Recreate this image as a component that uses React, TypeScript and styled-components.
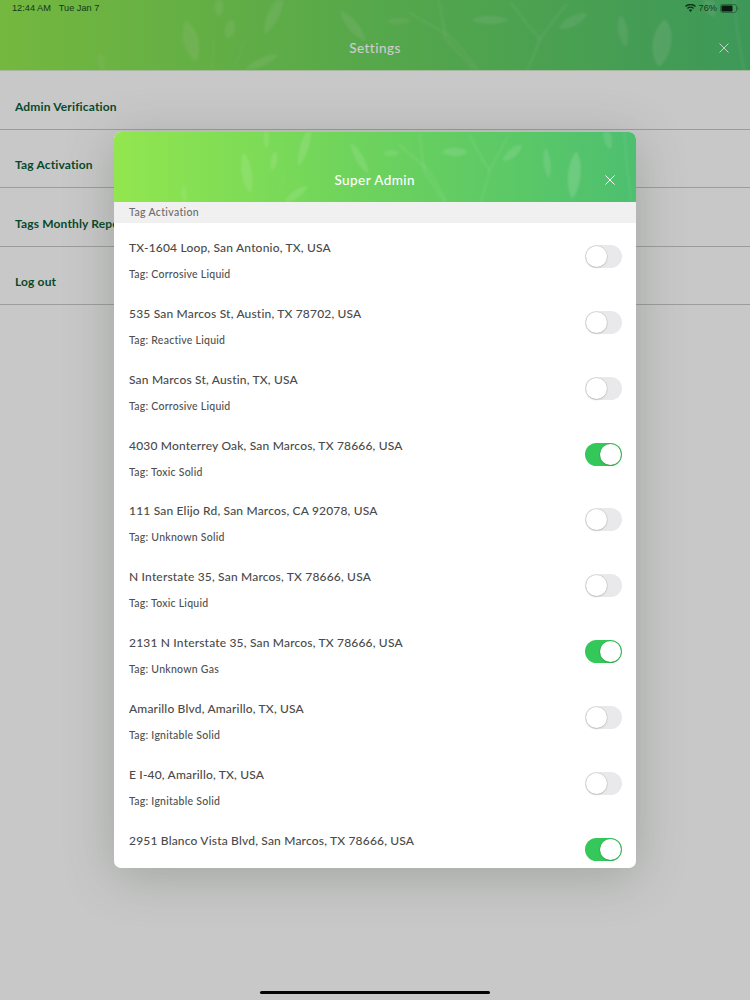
import React from "react";
import styled, { createGlobalStyle } from "styled-components";

const Global = createGlobalStyle`
  html, body { margin: 0; padding: 0; background: #fff; }
  * { box-sizing: border-box; }
  body { font-family: Lato, "Open Sans", sans-serif; }
`;

const Page = styled.div`
  position: relative;
  width: 750px;
  height: 1000px;
  overflow: hidden;
  background: #fbfbfb;
`;

const BannerWrap = styled.div<{ $h: number }>`
  position: relative;
  height: ${(p) => p.$h}px;
  flex: none;
  display: flex;
  align-items: center;
  justify-content: center;
  background: linear-gradient(90deg, #92e64f 0%, #6fd45c 45%, #4dbf6f 100%);
  overflow: hidden;
`;

const Art = styled.svg`
  position: absolute;
  inset: 0;
  width: 100%;
  height: 100%;
  filter: blur(0.8px);
`;

const MainBanner = styled(BannerWrap)`
  padding-top: 26px;
  border-bottom: 1px solid #cfe8c6;
`;

const DialogBanner = styled(BannerWrap)`
  padding-top: 26px;
`;

const BannerTitle = styled.h1`
  position: relative;
  margin: 0;
  color: #fff;
  font-size: 13.5px;
  font-weight: 500;
  letter-spacing: 0.45px;
`;

const CloseBtn = styled.button<{ $right: number }>`
  position: absolute;
  right: ${(p) => p.$right}px;
  bottom: 13px;
  width: 18px;
  height: 18px;
  padding: 0;
  border: 0;
  background: none;
  display: flex;
  align-items: center;
  justify-content: center;
`;

const Menu = styled.nav`
  display: flex;
  flex-direction: column;
`;

const MenuRow = styled.div`
  height: 58.6px;
  display: flex;
  align-items: center;
  padding: 12.500px 0 0 15px;
  border-bottom: 1px solid #c4c4c4;
  color: #0b5b34;
  font-size: 12px;
  font-weight: 700;
  letter-spacing: 0.15px;
`;

const Scrim = styled.div`
  position: absolute;
  inset: 0;
  background: rgba(0, 0, 0, 0.2);
`;

const Dialog = styled.section`
  position: absolute;
  left: 114px;
  top: 132px;
  width: 521.500px;
  height: 736px;
  border-radius: 7px;
  overflow: hidden;
  background: #fff;
  display: flex;
  flex-direction: column;
  box-shadow: 0 8px 50px rgba(70, 85, 70, 0.3);
`;

const SectionLabel = styled.div`
  height: 21px;
  flex: none;
  padding: 0 0 1px 15px;
  display: flex;
  align-items: center;
  background: #f0f0f0;
  color: #6b6b6b;
  font-size: 10.5px;
  font-weight: 500;
  letter-spacing: 0.35px;
`;

const List = styled.div`
  flex: 1;
  overflow: hidden;
  padding-top: 16px;
  display: flex;
  flex-direction: column;
`;

const Item = styled.div`
  flex: none;
  height: 65.85px;
  display: flex;
  justify-content: space-between;
  padding: 0 14px 0 15px;
`;

const ItemText = styled.div`
  display: flex;
  flex-direction: column;
`;

const Address = styled.div`
  color: #4a4a4a;
  font-size: 12px;
  font-weight: 500;
  line-height: 17px;
  letter-spacing: 0.18px;
`;

const TagLine = styled.div`
  margin-top: 12px;
  color: #4f4f4f;
  font-size: 10.5px;
  font-weight: 500;
  line-height: 13px;
  letter-spacing: 0.25px;
`;

const Toggle = styled.div<{ $on: boolean }>`
  position: relative;
  width: 37px;
  height: 23px;
  margin-top: 6px;
  border-radius: 12px;
  background: ${(p) => (p.$on ? "#34c759" : "#e9e9eb")};
`;

const Knob = styled.span<{ $on: boolean }>`
  position: absolute;
  top: 1px;
  left: ${(p) => (p.$on ? "15px" : "1px")};
  width: 21px;
  height: 21px;
  border-radius: 50%;
  background: #fff;
  box-shadow: 0 0 0 0.5px rgba(0, 0, 0, 0.12), 0 1px 2px rgba(0, 0, 0, 0.12);
`;

const StatusBar = styled.div`
  position: absolute;
  left: 12px;
  right: 11px;
  top: 1px;
  height: 14px;
  display: flex;
  justify-content: space-between;
  align-items: center;
  color: #13381a;
  font-family: "Liberation Sans", sans-serif;
  font-size: 9.2px;
`;

const StatusGroup = styled.div<{ $gap: number }>`
  display: flex;
  align-items: center;
  gap: ${(p) => p.$gap}px;
`;

const HomeBar = styled.div`
  position: absolute;
  left: 260px;
  bottom: 6px;
  width: 230px;
  height: 3.5px;
  border-radius: 2px;
  background: #050505;
`;

const Leaf: React.FC<{ x: number; y: number; rx: number; ry: number; r: number; o?: number }> = ({ x, y, rx, ry, r, o = 0.11 }) => (
  <path
    d={`M0 ${-ry} C ${rx * 1.2} ${-ry * 0.5} ${rx} ${ry * 0.6} 0 ${ry} C ${-rx} ${ry * 0.6} ${-rx * 1.2} ${-ry * 0.5} 0 ${-ry} Z`}
    transform={`translate(${x} ${y}) rotate(${r})`}
    fill="#fff"
    fillOpacity={o}
  />
);

const BannerArt = () => (
  <Art viewBox="0 0 750 70" preserveAspectRatio="none" aria-hidden="true">
    <g fill="none" stroke="#fff" strokeOpacity="0.07" strokeWidth="3" strokeLinecap="round">
      <path d="M213 40 C 214 50 212 60 212 70" strokeWidth="1.5" />
      <path d="M245 40 C 242 50 238 58 235 66" strokeWidth="1.5" />
      <path d="M439 2 C 442 15 444 28 446 39 C 455 50 466 60 475 70" />
      <path d="M410 13 C 425 22 440 30 453 39 C 462 50 472 60 478 70" />
      <path d="M511 3 C 520 15 530 28 540 39 C 536 50 531 60 528 70" />
      <path d="M566 5 C 557 17 547 28 540 39" />
      <path d="M734 0 C 736 25 740 50 744 70" />
    </g>
    <Leaf x={191} y={41} rx={9} ry={21} r={-14} />
    <Leaf x={230} y={29} rx={6} ry={10} r={15} />
    <Leaf x={219} y={7} rx={5} ry={10} r={0} />
    <Leaf x={274} y={14} rx={7} ry={22} r={25} />
    <Leaf x={353} y={26} rx={6} ry={20} r={-40} />
    <Leaf x={262} y={62} rx={5} ry={18} r={65} />
    <Leaf x={101} y={62} rx={5} ry={10} r={-10} o={0.07} />
    <Leaf x={399} y={21} rx={4} ry={12} r={88} o={0.09} />
    <Leaf x={490} y={20} rx={5} ry={19} r={90} />
    <Leaf x={573} y={21} rx={6} ry={16} r={62} />
    <Leaf x={623} y={31} rx={6} ry={16} r={-10} />
    <Leaf x={662} y={43} rx={11} ry={24} r={8} o={0.14} />
    <Leaf x={710} y={6} rx={7} ry={12} r={-20} />
  </Art>
);

const CloseIcon = () => (
  <svg width="10" height="10" viewBox="0 0 10 10" fill="none" stroke="#fff" strokeWidth="1">
    <path d="M0.5 0.5 9.5 9.500M9.5 0.5 0.5 9.5" />
  </svg>
);

const Wifi = () => (
  <svg width="11" height="8" viewBox="0 0 11 8" fill="#10331a">
    <path d="M5.500 8 3.800 6a2.500 2.500 0 0 1 3.400 0ZM2.900 5 1.900 3.900a5.300 5.300 0 0 1 7.200 0L8.100 5a3.900 3.900 0 0 0-5.200 0ZM1 3 0 1.900a8 8 0 0 1 11 0L10 3a6.600 6.600 0 0 0-9 0Z" />
  </svg>
);

const Battery = () => (
  <svg width="19" height="9" viewBox="0 0 19 9">
    <rect x="0.5" y="0.5" width="16" height="8" rx="2" fill="none" stroke="#10331a" strokeOpacity="0.45" />
    <rect x="1.5" y="1.5" width="11" height="6" rx="1" fill="#0a1a10" />
    <path d="M17.500 3v3c.8-.3 1-.9 1-1.500s-.2-1.200-1-1.500Z" fill="#10331a" fillOpacity="0.45" />
  </svg>
);

const menuItems = ["Admin Verification", "Tag Activation", "Tags Monthly Report", "Log out"];

const rows = [
  { a: "TX-1604 Loop, San Antonio, TX, USA", t: "Corrosive Liquid", on: false },
  { a: "535 San Marcos St, Austin, TX 78702, USA", t: "Reactive Liquid", on: false },
  { a: "San Marcos St, Austin, TX, USA", t: "Corrosive Liquid", on: false },
  { a: "4030 Monterrey Oak, San Marcos, TX 78666, USA", t: "Toxic Solid", on: true },
  { a: "111 San Elijo Rd, San Marcos, CA 92078, USA", t: "Unknown Solid", on: false },
  { a: "N Interstate 35, San Marcos, TX 78666, USA", t: "Toxic Liquid", on: false },
  { a: "2131 N Interstate 35, San Marcos, TX 78666, USA", t: "Unknown Gas", on: true },
  { a: "Amarillo Blvd, Amarillo, TX, USA", t: "Ignitable Solid", on: false },
  { a: "E I-40, Amarillo, TX, USA", t: "Ignitable Solid", on: false },
  { a: "2951 Blanco Vista Blvd, San Marcos, TX 78666, USA", t: "", on: true },
];

export default function App() {
  return (
    <Page>
      <Global />
      <MainBanner $h={71}>
        <BannerArt />
        <BannerTitle>Settings</BannerTitle>
        <CloseBtn $right={17} aria-label="Close settings">
          <CloseIcon />
        </CloseBtn>
      </MainBanner>
      <Menu>
        {menuItems.map((m) => (
          <MenuRow key={m}>{m}</MenuRow>
        ))}
      </Menu>
      <Scrim />
      <StatusBar>
        <StatusGroup $gap={8}>
          <span>12:44 AM</span>
          <span>Tue Jan 7</span>
        </StatusGroup>
        <StatusGroup $gap={3}>
          <Wifi />
          <span>76%</span>
          <Battery />
        </StatusGroup>
      </StatusBar>
      <Dialog>
        <DialogBanner $h={70}>
          <BannerArt />
          <BannerTitle>Super Admin</BannerTitle>
          <CloseBtn $right={17} aria-label="Close dialog">
            <CloseIcon />
          </CloseBtn>
        </DialogBanner>
        <SectionLabel>Tag Activation</SectionLabel>
        <List>
          {rows.map((r) => (
            <Item key={r.a}>
              <ItemText>
                <Address>{r.a}</Address>
                {r.t && <TagLine>Tag: {r.t}</TagLine>}
              </ItemText>
              <Toggle $on={r.on}>
                <Knob $on={r.on} />
              </Toggle>
            </Item>
          ))}
        </List>
      </Dialog>
      <HomeBar />
    </Page>
  );
}
